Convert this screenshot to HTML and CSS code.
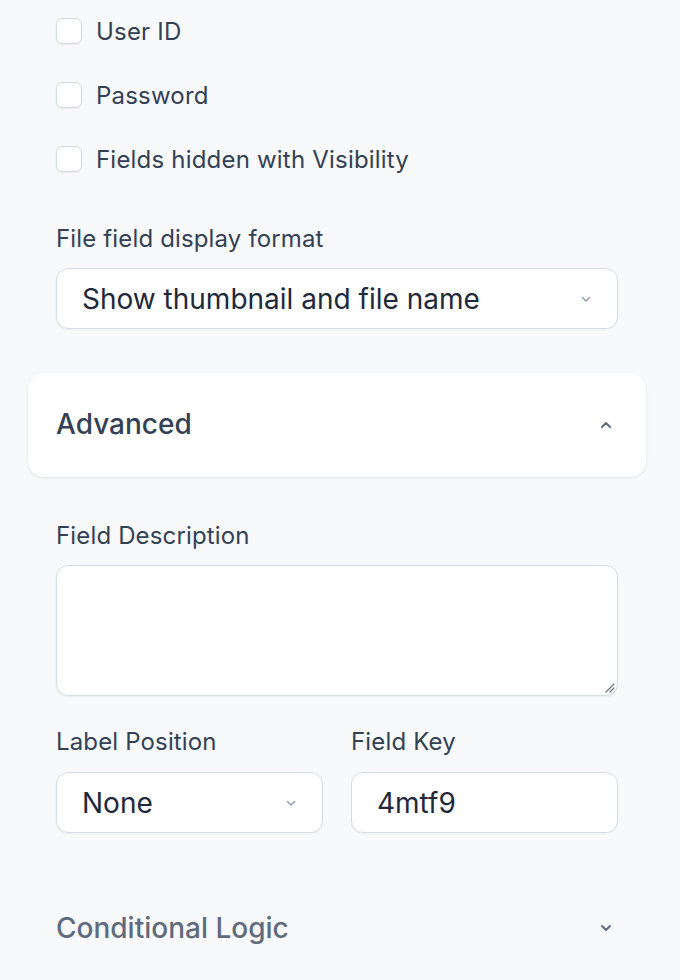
FILE: index.html
```html
<!DOCTYPE html>
<html>
<head>
<meta charset="utf-8">
<link rel="stylesheet" href="styles.css">
</head>
<body>
<div class="panel">
  <div class="checks">
    <label class="check"><span class="box"></span><span>User ID</span></label>
    <label class="check"><span class="box"></span><span>Password</span></label>
    <label class="check"><span class="box"></span><span>Fields hidden with Visibility</span></label>
  </div>

  <div class="field">
    <div class="label">File field display format</div>
    <div class="select">
      <span>Show thumbnail and file name</span>
      <svg class="chev" width="14" height="14" viewBox="0 0 14 14"><path d="M3.5 5.5 L7 9 L10.5 5.5" fill="none" stroke="#9aa3b2" stroke-width="1.6" stroke-linecap="round" stroke-linejoin="round"/></svg>
    </div>
  </div>

  <div class="card">
    <span class="card-title">Advanced</span>
    <svg class="chev" width="16" height="16" viewBox="0 0 16 16"><path d="M4 10 L8 6 L12 10" fill="none" stroke="#5f6b7d" stroke-width="2" stroke-linecap="round" stroke-linejoin="round"/></svg>
  </div>

  <div class="field desc">
    <div class="label">Field Description</div>
    <div class="textarea">
      <svg class="grip" width="12" height="12" viewBox="0 0 12 12"><path d="M11 3 L3 11 M11 7 L7 11" stroke="#6b7280" stroke-width="1.2" stroke-linecap="round"/></svg>
    </div>
  </div>

  <div class="row">
    <div class="field">
      <div class="label">Label Position</div>
      <div class="select">
        <span>None</span>
        <svg class="chev" width="14" height="14" viewBox="0 0 14 14"><path d="M3.5 5.5 L7 9 L10.5 5.5" fill="none" stroke="#9aa3b2" stroke-width="1.6" stroke-linecap="round" stroke-linejoin="round"/></svg>
      </div>
    </div>
    <div class="field">
      <div class="label">Field Key</div>
      <div class="select"><span>4mtf9</span></div>
    </div>
  </div>

  <div class="section">
    <span class="section-title">Conditional Logic</span>
    <svg class="chev" width="16" height="16" viewBox="0 0 16 16"><path d="M4 6 L8 10 L12 6" fill="none" stroke="#5f6b7d" stroke-width="2" stroke-linecap="round" stroke-linejoin="round"/></svg>
  </div>
</div>
</body>
</html>
```

FILE: styles.css
```css
html, body {
  margin: 0;
  padding: 0;
  background: #f8f9fb;
}
body {
  font-family: Inter, "Noto Sans", sans-serif;
  color: #334155;
}
.panel {
  padding: 0 62px 0 56px;
}
.checks {
  display: flex;
  flex-direction: column;
  gap: 38px;
  padding-top: 18px;
}
.check {
  display: flex;
  align-items: center;
  gap: 14px;
  font-size: 24px;
  letter-spacing: 0.2px;
  color: #334155;
  height: 26px;
}
.box {
  width: 24px;
  height: 24px;
  border: 1px solid #d5dae1;
  border-radius: 6px;
  background: #fff;
  box-shadow: 0 1px 2px rgba(16,24,40,0.06);
}
.field {
  display: flex;
  flex-direction: column;
}
.checks + .field {
  margin-top: 54px;
}
.label {
  font-size: 24px;
  letter-spacing: 0.15px;
  color: #334155;
  line-height: 26px;
  margin-bottom: 16px;
}
.select {
  height: 59px;
  border: 1px solid #d8dde4;
  border-radius: 12px;
  background: #fff;
  display: flex;
  align-items: center;
  justify-content: space-between;
  padding: 0 24px 0 25px;
  font-size: 28px;
  color: #1e293b;
  box-shadow: 0 1px 2px rgba(16,24,40,0.05);
}
.card {
  margin: 44px -28px 0 -28px;
  height: 104px;
  background: #fff;
  border-radius: 16px;
  box-shadow: 0 1px 3px rgba(16,24,40,0.10);
  display: flex;
  align-items: center;
  justify-content: space-between;
  padding: 0 32px 0 28px;
}
.card-title, .section-title {
  font-size: 28px;
  font-weight: 500;
  color: #334155;
}
.card-title {
  margin-top: -2px;
}
.desc {
  margin-top: 46px;
}
.textarea {
  height: 129px;
  border: 1px solid #d8dde4;
  border-radius: 12px;
  background: #fff;
  position: relative;
  box-shadow: 0 1px 2px rgba(16,24,40,0.05);
}
.grip {
  position: absolute;
  right: 2px;
  bottom: 2px;
}
.row {
  display: grid;
  grid-template-columns: 1fr 1fr;
  gap: 28px;
  margin-top: 33px;
}
.row .label {
  margin-bottom: 17px;
}
.section {
  margin-top: 78px;
  display: flex;
  align-items: center;
  justify-content: space-between;
  padding-right: 4px;
}
.section-title {
  color: #5f6b7d;
}
```
